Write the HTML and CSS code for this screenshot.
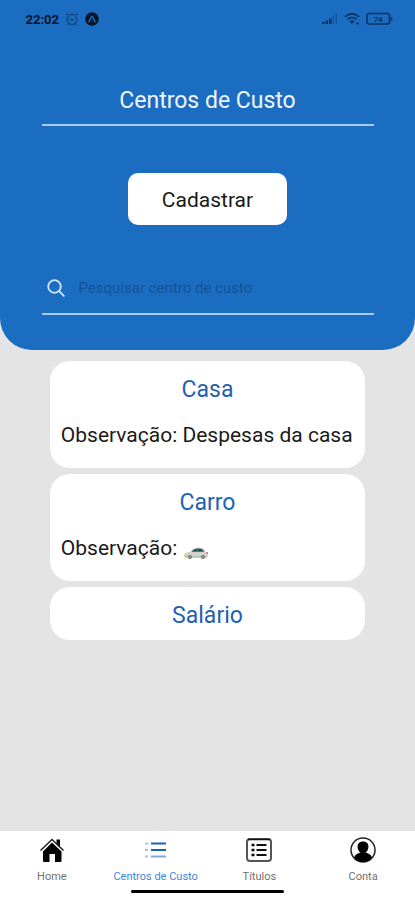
FILE: index.html
```html
<!DOCTYPE html>
<html lang="pt-BR">
<head>
<meta charset="utf-8">
<meta name="viewport" content="width=device-width, initial-scale=1">
<title>Centros de Custo</title>
<link rel="stylesheet" href="styles.css">
</head>
<body>
<div class="app">
  <header class="header">
    <div class="status">
      <div class="status-group">
        <span class="clock">22:02</span>
        <svg class="alarm" width="14" height="14" viewBox="0 0 14 14" fill="none" stroke="currentColor" aria-hidden="true"><circle cx="7" cy="7.5" r="5"/><path d="M1 3 3.500 1M13 3l-2.500-2M4.800 6.800 7 8.500l2.500-2M3.500 11.500l-1.500 1.500M10.500 11.500l1.500 1.500"/></svg>
        <svg width="14" height="14" viewBox="0 0 14 14" aria-hidden="true"><circle cx="7" cy="7" r="6.800" fill="#06152b"/><path d="M3.800 9.800C5 8.800 5.800 4.200 7 4.200s2 4.600 3.200 5.600" fill="none" stroke="#1b6dc1" stroke-width="1.500" stroke-linecap="round"/></svg>
      </div>
      <div class="status-group status-right">
        <svg width="16" height="12" viewBox="0 0 16 12" fill="currentColor" aria-hidden="true"><path d="M0 9h2.500v2H0zM3.500 7.500H6V11H3.500zM7 5.500h2.500V11H7z"/><path d="M10.500 3H12v8h-1.500zM13.500 1H15v10h-1.500z" opacity=".4"/></svg>
        <svg width="16" height="14" viewBox="0 0 16 14" fill="none" stroke="currentColor" stroke-width="1.700" aria-hidden="true"><path d="M1 5c4-4.300 10-4.300 14 0M3.500 7.500c2.600-2.700 6.400-2.700 9 0"/><path d="M5.500 9 8 12l2.500-3C9 8 7 8 5.500 9z" fill="currentColor" stroke="none"/><path d="M12 11.500h3" stroke-width="1.500"/></svg>
        <svg width="28" height="14" viewBox="0 0 28 14" aria-hidden="true"><rect x="1" y="1.500" width="22.500" height="10.500" rx="2.500" fill="none" stroke="currentColor" stroke-width="1.500"/><path d="M24.500 4.500 27 7l-2.500 2.500z" fill="currentColor"/><text class="charge" x="12" y="10" text-anchor="middle">74</text></svg>
      </div>
    </div>
    <h1 class="title">Centros de Custo</h1>
    <button class="register" type="button">Cadastrar</button>
    <label class="search">
      <svg width="18" height="18" viewBox="0 0 18 18" fill="none" stroke="#d5e7fb" stroke-width="1.800" stroke-linecap="round" aria-hidden="true"><circle cx="7.500" cy="7.500" r="6.300"/><path d="m12.200 12.200 4.600 4.600"/></svg>
      <input type="search" placeholder="Pesquisar centro de custo" aria-label="Pesquisar centro de custo">
    </label>
  </header>

  <main class="list">
    <article class="card">
      <h2>Casa</h2>
      <p>Observação: Despesas da casa</p>
    </article>
    <article class="card">
      <h2>Carro</h2>
      <p>Observação: <svg class="car" width="26" height="14" viewBox="0 0 26 14" role="img" aria-label="Carro"><path d="M1 8.500C2 6.500 5 6 7.500 5.500 10 2.500 12 1.500 16 1.500c4 0 5.500 1.500 6.500 4 1.800.5 2.500 1.500 2.500 5l-3 1H4L1 10.800z" fill="#cfd2ce"/><path d="M8.500 5.800C10.500 3.500 12 2.500 15.500 2.500c3 0 4.500 1 5.500 3.200z" fill="#29535c"/><path d="M14.500 2.500v3.200" stroke="#5f7d80"/><path d="M1 8.500h3l-1 2H1z" fill="#e2dc69"/><path d="M23.500 6h1.200l.3 2h-1.500z" fill="#cf6967"/><path d="M2 11h22" stroke="#aaaba4"/><circle cx="7" cy="11" r="2" fill="#76736c"/><circle cx="20" cy="11" r="2" fill="#76736c"/><circle cx="7" cy="11" r=".8" fill="#bbb"/><circle cx="20" cy="11" r=".8" fill="#bbb"/></svg></p>
    </article>
    <article class="card">
      <h2>Salário</h2>
    </article>
  </main>

  <footer class="bottom">
    <nav class="tabs">
      <a href="#home">
        <svg width="26" height="26" viewBox="0 0 26 26" aria-hidden="true"><path d="M17.500 2.500H21v8l-3.500-3.200z"/><path d="m1.500 13.500 11.500-11 11.500 11" fill="none" stroke="#222" stroke-width="1.500"/><path d="m13 5.500 9.500 9V24q0 1-1 1H16v-8h-5.500v8H5q-1 0-1-1v-9.500z"/></svg>
        <span>Home</span>
      </a>
      <a class="active" href="#centros" aria-current="page">
        <svg width="26" height="26" viewBox="0 0 26 26" fill="none" stroke-width="2" aria-hidden="true"><path d="M8 6.500h15M8 13h15" stroke="#1c63b0"/><path d="M8 19.500h15" stroke="#7da8d8"/><path d="M2 6.500h3M2 13h3M2 19.500h3" stroke="#a5c3e5"/></svg>
        <span>Centros de Custo</span>
      </a>
      <a href="#titulos">
        <svg width="26" height="26" viewBox="0 0 26 26" fill="none" stroke="#111" aria-hidden="true"><rect x="1" y="2" width="24" height="22" rx="3" stroke="#555" stroke-width="2"/><path d="M2 2.500h22" stroke-width="1.500"/><path d="M10.500 8h10M10.500 13h10M10.500 18h10" stroke-width="2"/><path d="M5.500 8h3M5.500 13h3M5.500 18h3" stroke-width="2.500"/></svg>
        <span>Títulos</span>
      </a>
      <a href="#conta">
        <svg width="26" height="26" viewBox="0 0 26 26" aria-hidden="true"><circle cx="13" cy="13" r="12" fill="#fff" stroke="#222" stroke-width="1.500"/><path d="M13 4.500c3.800 0 5.700 2.400 5.400 5.700-.3 3.200-2.400 6.300-5.400 6.300s-5.100-3.100-5.400-6.300c-.3-3.300 1.600-5.700 5.400-5.700z"/><path d="M4 20.500c1-2.800 3.500-3.800 6.500-4.900h5c3 1.100 5.500 2.100 6.500 4.900C19.500 23.500 16.500 25 13 25s-6.500-1.500-9-4.500z"/></svg>
        <span>Conta</span>
      </a>
    </nav>
    <div class="handle"></div>
  </footer>
</div>
</body>
</html>
```

FILE: styles.css
```css
* { box-sizing: border-box; }

body {
  margin: 0;
  background: #e4e4e4;
  color: #1a1a1a;
  font-family: Roboto, "Liberation Sans", sans-serif;
}

.app {
  display: flex;
  flex-direction: column;
  min-height: 100vh;
}

.header {
  display: flex;
  flex-direction: column;
  padding: 0 10% 35px;
  background: #1b6dc1;
  border-radius: 0 0 32px 32px;
}

.status {
  display: flex;
  justify-content: space-between;
  align-items: center;
  height: 38px;
  margin: 0 -20px;
  color: #0b3263;
}

.status-group {
  display: flex;
  align-items: center;
  gap: 6px;
  padding-left: 4px;
}

.status-right { padding: 0; }

.clock {
  color: #06152b;
  font-size: 13px;
  font-weight: 700;
}

.charge {
  fill: currentColor;
  font-size: 8px;
  font-weight: 700;
}

.title {
  margin: 47px 0 0;
  padding-bottom: 7px;
  border-bottom: 2px solid #a9cbf0;
  color: #eef6ff;
  font-size: 23px;
  font-weight: 400;
  line-height: 32px;
  text-align: center;
}

.register {
  align-self: center;
  margin-top: 47px;
  padding: 11px 34px 9px;
  border: 0;
  border-radius: 10px;
  background: #fff;
  color: #1a1a1a;
  font: 400 21px/32px Roboto, "Liberation Sans", sans-serif;
}

.search {
  display: flex;
  align-items: center;
  gap: 14px;
  margin-top: 47px;
  padding: 0 5px 9px;
  border-bottom: 2px solid #a9cbf0;
}

.search input {
  flex: 1;
  min-width: 0;
  height: 32px;
  padding: 0;
  border: 0;
  outline: 0;
  background: transparent;
  color: #fff;
  font: 400 15px/32px Roboto, "Liberation Sans", sans-serif;
}

.search input::placeholder {
  color: #15539a;
  opacity: 1;
}

.list {
  display: flex;
  flex: 1;
  flex-direction: column;
  gap: 6px;
  padding: 11px 12%;
}

.card {
  padding: 14px 11px 9px;
  border-radius: 20px;
  background: #fff;
}

.card h2 {
  margin: 0;
  color: #1f62b3;
  font-size: 23px;
  font-weight: 400;
  line-height: 30px;
  text-align: center;
}

.card p {
  margin: 15px 0 9px;
  font-size: 21px;
  line-height: 30px;
}

.car {
  margin-left: 1px;
  vertical-align: -5px;
}

.bottom {
  padding: 6px 0 7px;
  background: #fff;
}

.tabs {
  display: grid;
  grid-template-columns: repeat(4, 1fr);
}

.tabs a {
  display: flex;
  flex-direction: column;
  align-items: center;
  gap: 7px;
  color: #707070;
  font-size: 11px;
  line-height: 14px;
  text-decoration: none;
}

.tabs .active { color: #3b87dc; }

.handle {
  width: 37%;
  height: 3px;
  margin: 6px auto 0;
  border-radius: 2px;
  background: #000;
}
```
